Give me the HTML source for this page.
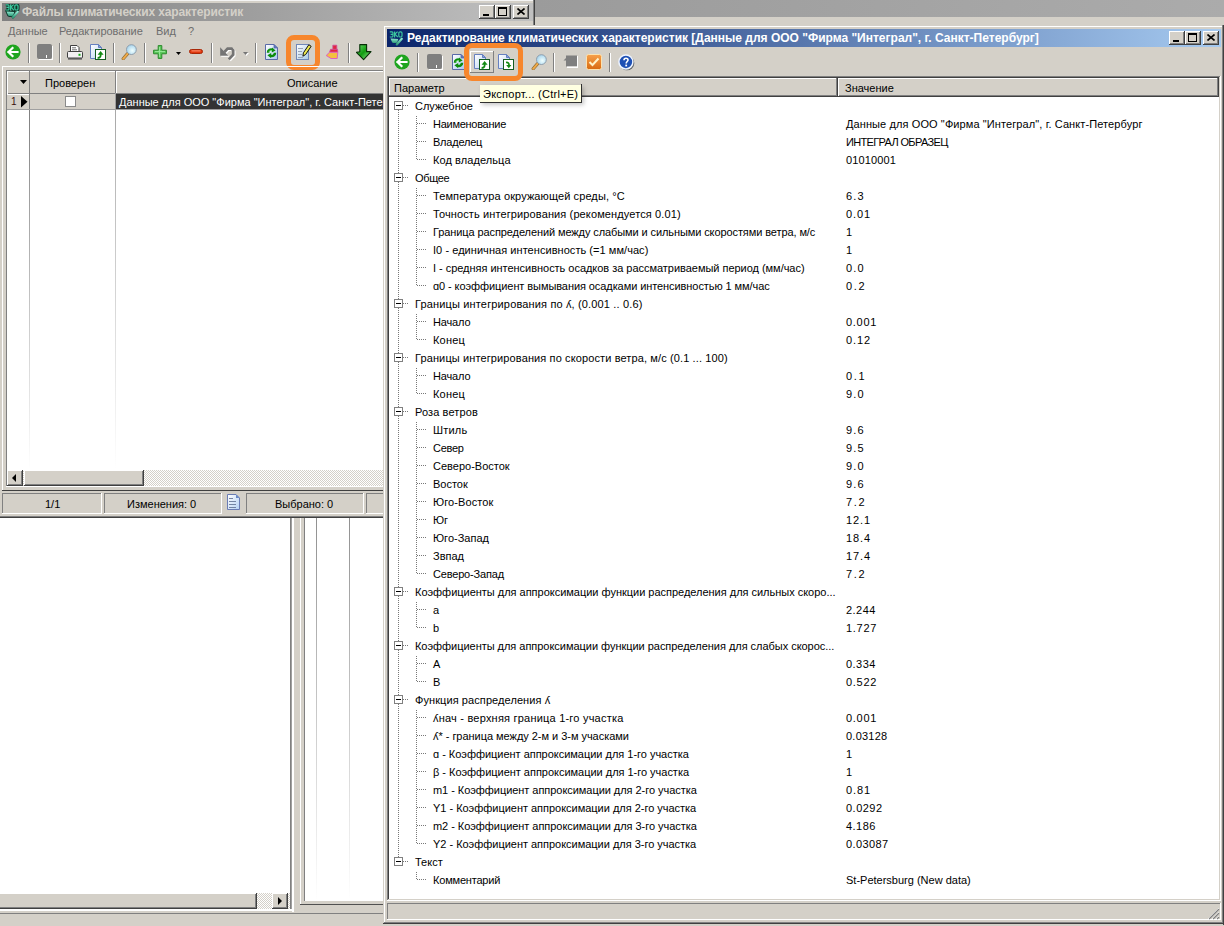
<!DOCTYPE html><html><head><meta charset="utf-8"><style>*{margin:0;padding:0;box-sizing:border-box}html,body{width:1224px;height:926px;overflow:hidden}body{position:relative;background:#d4d0c8;font-family:"Liberation Sans",sans-serif;font-size:11px;color:#000}div,span{position:absolute}span{white-space:pre;line-height:18px}</style></head><body>
<div style="left:535px;top:0px;width:689px;height:17px;background:linear-gradient(90deg,#9b9b9b,#ababab);"></div>
<div style="left:0px;top:0px;width:535px;height:518px;background:#d4d0c8;"></div>
<div style="left:0px;top:0px;width:533px;height:1px;background:#f4f4f4;"></div>
<div style="left:533px;top:0px;width:1px;height:25px;background:#808080;"></div>
<div style="left:534px;top:0px;width:1px;height:25px;background:#404040;"></div>
<div style="left:0px;top:516px;width:534px;height:1px;background:#808080;"></div>
<div style="left:0px;top:517px;width:534px;height:1px;background:#404040;"></div>
<div style="left:2px;top:3px;width:531px;height:18px;background:linear-gradient(90deg,#808080,#c0c0c0);"></div>
<svg style="position:absolute;left:5px;top:4px" width="15" height="16" viewBox="0 0 15 16"><defs><linearGradient id="eb" x1="0" y1="0" x2="0" y2="1"><stop offset="0" stop-color="#8ee8d0"/><stop offset="1" stop-color="#2e9a78"/></linearGradient></defs><path d="M0.8 0.8 H3 Q4 0.8 4 2 V4.8 Q4 6 3 6 H0.8 M1.6 3.4 H3.8 M5.6 0.4 V6.4 M5.6 3.4 L8.6 0.6 M6 3.2 L8.8 6.2" stroke="#0e3a2c" stroke-width="3.2" fill="none"/><rect x="9.8" y="0.8" width="3.2" height="5.2" rx="1.3" stroke="#0e3a2c" stroke-width="3.2" fill="none"/><path d="M1.5 7.4 L9.2 8 L8.2 11.4 Q5.5 12.8 3.2 11.4 Z" fill="#0e3a2c" stroke="#0e3a2c" stroke-width="2"/><path d="M7.8 13.4 L12.8 7.8" stroke="#0e3a2c" stroke-width="2.2" stroke-linecap="round"/><path d="M0.8 0.8 H3 Q4 0.8 4 2 V4.8 Q4 6 3 6 H0.8 M1.6 3.4 H3.8 M5.6 0.4 V6.4 M5.6 3.4 L8.6 0.6 M6 3.2 L8.8 6.2" stroke="#3cc89e" stroke-width="1.2" fill="none"/><rect x="9.8" y="0.8" width="3.2" height="5.2" rx="1.3" stroke="#3cc89e" stroke-width="1.2" fill="none"/><path d="M1.5 7.4 L9.2 8 L8.2 11.4 Q5.5 12.8 3.2 11.4 Z" fill="url(#eb)"/><path d="M7.8 13.4 L12.8 7.8" stroke="url(#eb)" stroke-width="2.2" stroke-linecap="round"/></svg>
<span style="left:22px;top:3px;font-weight:bold;font-size:12px;letter-spacing:-0.13px;color:#d4d0c8">Файлы климатических характеристик</span>
<div style="left:479px;top:5px;width:16px;height:14px;background:#d4d0c8;"></div>
<div style="left:479px;top:5px;width:16px;height:1px;background:#ffffff;"></div>
<div style="left:479px;top:5px;width:1px;height:14px;background:#ffffff;"></div>
<div style="left:479px;top:18px;width:16px;height:1px;background:#404040;"></div>
<div style="left:494px;top:5px;width:1px;height:14px;background:#404040;"></div>
<div style="left:480px;top:17px;width:14px;height:1px;background:#808080;"></div>
<div style="left:493px;top:6px;width:1px;height:12px;background:#808080;"></div>
<div style="left:495px;top:5px;width:16px;height:14px;background:#d4d0c8;"></div>
<div style="left:495px;top:5px;width:16px;height:1px;background:#ffffff;"></div>
<div style="left:495px;top:5px;width:1px;height:14px;background:#ffffff;"></div>
<div style="left:495px;top:18px;width:16px;height:1px;background:#404040;"></div>
<div style="left:510px;top:5px;width:1px;height:14px;background:#404040;"></div>
<div style="left:496px;top:17px;width:14px;height:1px;background:#808080;"></div>
<div style="left:509px;top:6px;width:1px;height:12px;background:#808080;"></div>
<div style="left:513px;top:5px;width:16px;height:14px;background:#d4d0c8;"></div>
<div style="left:513px;top:5px;width:16px;height:1px;background:#ffffff;"></div>
<div style="left:513px;top:5px;width:1px;height:14px;background:#ffffff;"></div>
<div style="left:513px;top:18px;width:16px;height:1px;background:#404040;"></div>
<div style="left:528px;top:5px;width:1px;height:14px;background:#404040;"></div>
<div style="left:514px;top:17px;width:14px;height:1px;background:#808080;"></div>
<div style="left:527px;top:6px;width:1px;height:12px;background:#808080;"></div>
<div style="left:483px;top:14px;width:6px;height:2px;background:#000;"></div>
<div style="left:498px;top:7px;width:9px;height:9px;border:1px solid #000;border-top-width:2px"></div>
<svg style="position:absolute;left:517px;top:8px" width="8" height="7" viewBox="0 0 8 7"><path d="M0.5 0.5 L7.5 6.5 M7.5 0.5 L0.5 6.5" stroke="#000" stroke-width="1.6"/></svg>
<span style="left:8px;top:22px;color:#6d6d6d">Данные</span>
<span style="left:59px;top:22px;color:#6d6d6d">Редактирование</span>
<span style="left:156px;top:22px;color:#6d6d6d">Вид</span>
<span style="left:188px;top:22px;color:#6d6d6d">?</span>
<svg style="position:absolute;left:5px;top:44px" width="16" height="16" viewBox="0 0 16 16"><circle cx="8" cy="8" r="7.6" fill="#1fa51f"/><path d="M3.5 8 L7.5 4 M3.5 8 L7.5 12 M3.5 8 H12.5" stroke="#fff" stroke-width="2.2" fill="none" stroke-linecap="square"/></svg>
<div style="left:28px;top:43px;width:1px;height:20px;background:#808080;"></div>
<div style="left:29px;top:43px;width:1px;height:20px;background:#ffffff;"></div>
<svg style="position:absolute;left:37px;top:44px" width="17" height="17" viewBox="0 0 17 17"><rect x="0" y="0" width="15" height="15" rx="2" fill="#7f7f7f"/><rect x="15" y="2" width="1" height="14" fill="#fff"/><rect x="2" y="15" width="14" height="1" fill="#fff"/><rect x="9" y="11" width="1" height="3" fill="#fff"/></svg>
<div style="left:59px;top:43px;width:1px;height:20px;background:#808080;"></div>
<div style="left:60px;top:43px;width:1px;height:20px;background:#ffffff;"></div>
<svg style="position:absolute;left:67px;top:44px" width="16" height="17" viewBox="0 0 16 17"><path d="M3.5 1.5 H10 L12 3.5 V7.5 H3.5 Z" fill="#fff" stroke="#404040"/><path d="M5 3.8 H9 M5 5.8 H10" stroke="#707070"/><rect x="0.5" y="7.5" width="15" height="6.5" rx="1" fill="#f2f0f2" stroke="#404040"/><rect x="1" y="14" width="14" height="1.6" fill="#5a5a5a"/><rect x="11.5" y="9.8" width="2" height="2" fill="#10b010"/></svg>
<svg style="position:absolute;left:90px;top:44px" width="17" height="17" viewBox="0 0 17 17"><defs><linearGradient id="dg" x1="0" y1="0" x2="1" y2="1"><stop offset="0" stop-color="#ffffff"/><stop offset="1" stop-color="#bcd2f2"/></linearGradient></defs><path d="M0.5 0.5h8l3 3V14.5H0.5z" fill="url(#dg)" stroke="#6680c0"/><path d="M8.5 0.5v3h3z" fill="#8aa4dc" stroke="#6680c0"/><rect x="5.5" y="5.5" width="10" height="10" fill="#fff" stroke="#145c22"/><path d="M7.6 14 C10.4 14 11 12.2 10.5 10" stroke="#128a12" stroke-width="1.8" fill="none"/><path d="M7.6 10.8 L10.6 6.9 L13.6 10.8z" fill="#128a12"/></svg>
<div style="left:113px;top:43px;width:1px;height:20px;background:#808080;"></div>
<div style="left:114px;top:43px;width:1px;height:20px;background:#ffffff;"></div>
<svg style="position:absolute;left:120px;top:44px" width="17" height="16" viewBox="0 0 17 16"><defs><radialGradient id="lg" cx="0.6" cy="0.6" r="0.6"><stop offset="0" stop-color="#f0ffff"/><stop offset="1" stop-color="#a8d4ec"/></radialGradient></defs><path d="M7.6 9.6 L3.2 14.8" stroke="#8a6a3a" stroke-width="3.2" stroke-linecap="round"/><path d="M7.6 9.6 L3.2 14.8" stroke="#f0aa48" stroke-width="2" stroke-linecap="round"/><circle cx="11.4" cy="5.6" r="4.9" fill="url(#lg)" stroke="#8898a8" stroke-width="0.9"/></svg>
<div style="left:144px;top:43px;width:1px;height:20px;background:#808080;"></div>
<div style="left:145px;top:43px;width:1px;height:20px;background:#ffffff;"></div>
<svg style="position:absolute;left:153px;top:45px" width="15" height="15" viewBox="0 0 15 15"><path d="M5.2 0.6 H8.8 V5.2 H13.4 V8.8 H8.8 V13.4 H5.2 V8.8 H0.6 V5.2 H5.2 Z" fill="#5cc85c" stroke="#2a8a2a" stroke-width="1" stroke-linejoin="round"/><path d="M6.5 2 V12 M2 6.5 H12" stroke="#9ae89a" stroke-width="0.9"/></svg>
<svg style="position:absolute;left:176px;top:52px" width="6" height="4" viewBox="0 0 6 4"><path d="M0 0h5l-2.5 3z" fill="#000"/></svg>
<svg style="position:absolute;left:189px;top:49px" width="14" height="5" viewBox="0 0 14 5"><rect x="0.5" y="0.5" width="13" height="4" rx="2" fill="#e0380e" stroke="#a82808"/><rect x="2.5" y="1.4" width="9" height="1" fill="#ff9a7a"/></svg>
<div style="left:211px;top:43px;width:1px;height:20px;background:#808080;"></div>
<div style="left:212px;top:43px;width:1px;height:20px;background:#ffffff;"></div>
<svg style="position:absolute;left:219px;top:46px" width="18" height="17" viewBox="0 0 18 17"><g transform="translate(1 1)"><path d="M1.2 1.2 V9.7 H9.4 Z" fill="#ffffff"/><path d="M5.5 6 L8.6 2.6 H12.6 L14.2 4.4 V8.6 L9.8 13.4" stroke="#ffffff" stroke-width="2.7" fill="none"/></g><g transform="translate(0 0)"><path d="M1.2 1.2 V9.7 H9.4 Z" fill="#747474"/><path d="M5.5 6 L8.6 2.6 H12.6 L14.2 4.4 V8.6 L9.8 13.4" stroke="#747474" stroke-width="2.7" fill="none"/></g></svg>
<svg style="position:absolute;left:244px;top:53px" width="6" height="4" viewBox="0 0 6 4"><path d="M0 0h5l-2.5 3z" fill="#ffffff"/></svg>
<svg style="position:absolute;left:243px;top:52px" width="6" height="4" viewBox="0 0 6 4"><path d="M0 0h5l-2.5 3z" fill="#747474"/></svg>
<div style="left:255px;top:43px;width:1px;height:20px;background:#808080;"></div>
<div style="left:256px;top:43px;width:1px;height:20px;background:#ffffff;"></div>
<svg style="position:absolute;left:265px;top:44px" width="14" height="17" viewBox="0 0 14 17"><defs><linearGradient id="rg" x1="0" y1="0" x2="1" y2="1"><stop offset="0" stop-color="#ffffff"/><stop offset="1" stop-color="#a8c8f0"/></linearGradient></defs><path d="M0.5 0.5H9L12.5 4V15.5H0.5Z" fill="url(#rg)" stroke="#5a6aa8"/><path d="M9 0.5L12.5 4H9Z" fill="#5a7ac0" stroke="#5a6aa8" stroke-width="0.8"/><path d="M3 8.8 C3 5.8 5.5 5 8 6" stroke="#0c8c0c" stroke-width="2.6" fill="none"/><path d="M7 3.6 L10.6 6.4 L6.8 8.6 Z" fill="#0c8c0c"/><path d="M10 8.8 C10 11.8 7.5 12.6 5 11.6" stroke="#0c8c0c" stroke-width="2.6" fill="none"/><path d="M6 14 L2.4 11.2 L6.2 9 Z" fill="#0c8c0c"/><path d="M4 8 C4.2 6.8 5.5 6.2 7 6.5" stroke="#8ef08e" stroke-width="0.8" fill="none"/></svg>
<svg style="position:absolute;left:296px;top:44px" width="17" height="17" viewBox="0 0 17 17"><defs><linearGradient id="eg" x1="0" y1="0" x2="1" y2="1"><stop offset="0" stop-color="#ffffff"/><stop offset="1" stop-color="#a8cce8"/></linearGradient></defs><rect x="0.5" y="0.5" width="12" height="15" fill="url(#eg)" stroke="#7088b8"/><path d="M2 4.5h5M2 7.5h4M2 10.5h4M2 13.5h5" stroke="#98a4b8"/><path d="M12.84 0.72 L15.16 2.28 L9.72 10.44 L6.9 12.2 L7.4 8.88 Z" fill="#f0ec50" stroke="#101010" stroke-width="1"/></svg>
<svg style="position:absolute;left:325px;top:44px" width="15" height="16" viewBox="0 0 15 16"><path d="M7.8 1.2 H11.8 V5.5 H7.8 Z" fill="#e02840" stroke="#d050a0" stroke-width="0.8"/><path d="M5.5 5.3 H12.5 L12.8 8.3 H4.5 Z" fill="#e02840" stroke="#d050a0" stroke-width="0.8"/><path d="M4.5 8.3 H12.8 L12.2 14.5 H6 L1.2 11.5 Z" fill="#f4c040" stroke="#e060c0" stroke-width="1"/></svg>
<div style="left:348px;top:43px;width:1px;height:20px;background:#808080;"></div>
<div style="left:349px;top:43px;width:1px;height:20px;background:#ffffff;"></div>
<svg style="position:absolute;left:356px;top:44px" width="17" height="17" viewBox="0 0 17 17"><defs><linearGradient id="ag" x1="0" y1="0" x2="1" y2="1"><stop offset="0" stop-color="#70e070"/><stop offset="0.5" stop-color="#109a10"/><stop offset="1" stop-color="#a0f4a0"/></linearGradient></defs><path d="M3.8 0.6h6.8v7h4.4l-7.4 8l-7.2-7.2l3.4-0.6z" fill="url(#ag)" stroke="#062e06" stroke-width="1.1" stroke-linejoin="round"/></svg>
<div style="left:286px;top:35px;width:34px;height:35px;border:5px solid #f7862c;border-radius:8px"></div>
<div style="left:2px;top:66px;width:381px;height:1px;background:#ffffff;"></div>
<div style="left:2px;top:66px;width:1px;height:425px;background:#ffffff;"></div>
<div style="left:2px;top:490px;width:381px;height:1px;background:#404040;"></div>
<div style="left:6px;top:70px;width:377px;height:417px;background:#ffffff;"></div>
<div style="left:6px;top:70px;width:377px;height:1px;background:#808080;"></div>
<div style="left:6px;top:70px;width:1px;height:417px;background:#808080;"></div>
<div style="left:6px;top:486px;width:377px;height:1px;background:#ffffff;"></div>
<div style="left:7px;top:71px;width:376px;height:22px;background:#d4d0c8;"></div>
<div style="left:7px;top:71px;width:376px;height:1px;background:#ffffff;"></div>
<div style="left:7px;top:93px;width:376px;height:1px;background:#808080;"></div>
<div style="left:29px;top:71px;width:1px;height:39px;background:#808080;"></div>
<div style="left:115px;top:71px;width:1px;height:22px;background:#808080;"></div>
<div style="left:116px;top:71px;width:1px;height:22px;background:#ffffff;"></div>
<div style="left:115px;top:93px;width:1px;height:17px;background:#a0a0a0;"></div>
<div style="left:29px;top:110px;width:1px;height:360px;background:linear-gradient(180deg,#808080,#ffffff);"></div>
<div style="left:115px;top:110px;width:1px;height:360px;background:linear-gradient(180deg,#a8a8a8,#ffffff);"></div>
<div style="left:7px;top:71px;width:1px;height:38px;background:#ffffff;"></div>
<svg style="position:absolute;left:20px;top:80px" width="8" height="5" viewBox="0 0 8 5"><path d="M0 0h7l-3.5 4z" fill="#000"/></svg>
<span style="left:45px;top:74px">Проверен</span>
<span style="left:287px;top:74px">Описание</span>
<div style="left:7px;top:94px;width:22px;height:15px;background:#d4d0c8;"></div>
<div style="left:30px;top:94px;width:85px;height:15px;background:#d4d0c8;"></div>
<div style="left:7px;top:94px;width:22px;height:1px;background:#ffffff;"></div>
<div style="left:116px;top:94px;width:267px;height:15px;background:#333333;"></div>
<div style="left:7px;top:109px;width:376px;height:1px;background:#a0a0a0;"></div>
<span style="left:11px;top:93px;font-size:10px;color:#3a0c0c">1</span>
<svg style="position:absolute;left:21px;top:96px" width="7" height="12" viewBox="0 0 7 12"><path d="M0 0 L6.5 5.75 L0 11.5z" fill="#000"/></svg>
<div style="left:65px;top:96px;width:11px;height:11px;background:#fff;border:1px solid #8a8a8a"></div>
<span style="left:119px;top:93px;color:#fff">Данные для ООО "Фирма "Интеграл", г. Санкт-Петербург"</span>
<div style="left:7px;top:470px;width:376px;height:16px;background:repeating-conic-gradient(#d4d0c8 0 25%,#fff 0 50%) 0 0/2px 2px;"></div>
<div style="left:7px;top:470px;width:16px;height:16px;background:#d4d0c8;"></div>
<div style="left:7px;top:470px;width:16px;height:1px;background:#ffffff;"></div>
<div style="left:7px;top:470px;width:1px;height:16px;background:#ffffff;"></div>
<div style="left:7px;top:485px;width:16px;height:1px;background:#404040;"></div>
<div style="left:22px;top:470px;width:1px;height:16px;background:#404040;"></div>
<div style="left:8px;top:484px;width:14px;height:1px;background:#808080;"></div>
<div style="left:21px;top:471px;width:1px;height:14px;background:#808080;"></div>
<svg style="position:absolute;left:12px;top:474px" width="5" height="8" viewBox="0 0 5 8"><path d="M4 0 L0 4 L4 8z" fill="#000"/></svg>
<div style="left:24px;top:470px;width:120px;height:16px;background:#d4d0c8;"></div>
<div style="left:24px;top:470px;width:120px;height:1px;background:#ffffff;"></div>
<div style="left:24px;top:470px;width:1px;height:16px;background:#ffffff;"></div>
<div style="left:24px;top:485px;width:120px;height:1px;background:#404040;"></div>
<div style="left:143px;top:470px;width:1px;height:16px;background:#404040;"></div>
<div style="left:25px;top:484px;width:118px;height:1px;background:#808080;"></div>
<div style="left:142px;top:471px;width:1px;height:14px;background:#808080;"></div>
<div style="left:2px;top:493px;width:100px;height:21px;background:#d4d0c8;"></div>
<div style="left:2px;top:493px;width:100px;height:1px;background:#808080;"></div>
<div style="left:2px;top:493px;width:1px;height:21px;background:#808080;"></div>
<div style="left:2px;top:513px;width:100px;height:1px;background:#ffffff;"></div>
<div style="left:101px;top:493px;width:1px;height:21px;background:#ffffff;"></div>
<div style="left:104px;top:493px;width:118px;height:21px;background:#d4d0c8;"></div>
<div style="left:104px;top:493px;width:118px;height:1px;background:#808080;"></div>
<div style="left:104px;top:493px;width:1px;height:21px;background:#808080;"></div>
<div style="left:104px;top:513px;width:118px;height:1px;background:#ffffff;"></div>
<div style="left:221px;top:493px;width:1px;height:21px;background:#ffffff;"></div>
<div style="left:246px;top:493px;width:118px;height:21px;background:#d4d0c8;"></div>
<div style="left:246px;top:493px;width:118px;height:1px;background:#808080;"></div>
<div style="left:246px;top:493px;width:1px;height:21px;background:#808080;"></div>
<div style="left:246px;top:513px;width:118px;height:1px;background:#ffffff;"></div>
<div style="left:363px;top:493px;width:1px;height:21px;background:#ffffff;"></div>
<div style="left:366px;top:493px;width:30px;height:21px;background:#d4d0c8;"></div>
<div style="left:366px;top:493px;width:30px;height:1px;background:#808080;"></div>
<div style="left:366px;top:493px;width:1px;height:21px;background:#808080;"></div>
<div style="left:366px;top:513px;width:30px;height:1px;background:#ffffff;"></div>
<div style="left:395px;top:493px;width:1px;height:21px;background:#ffffff;"></div>
<span style="left:45px;top:495px">1/1</span>
<span style="left:127px;top:495px">Изменения: 0</span>
<span style="left:275px;top:495px">Выбрано: 0</span>
<svg style="position:absolute;left:227px;top:494px" width="14" height="17" viewBox="0 0 14 17"><defs><linearGradient id="sg" x1="0" y1="0" x2="1" y2="1"><stop offset="0" stop-color="#ffffff"/><stop offset="1" stop-color="#b4d0f4"/></linearGradient></defs><path d="M0.5 0.5H9L12.5 4V15.5H0.5Z" fill="url(#sg)" stroke="#6a7cb4"/><path d="M9 0.5L12.5 4H9Z" fill="#6a8ac8"/><path d="M2 4.5h4M2 7.5h7M2 10.5h7M2 13.5h7" stroke="#687898" stroke-width="0.9"/></svg>
<div style="left:0px;top:518px;width:384px;height:408px;background:#d4d0c8;"></div>
<div style="left:0px;top:518px;width:290px;height:375px;background:#ffffff;"></div>
<div style="left:288px;top:518px;width:2px;height:375px;background:#ffffff;"></div>
<div style="left:290px;top:518px;width:1px;height:393px;background:#808080;"></div>
<div style="left:291px;top:518px;width:1px;height:393px;background:#a0a0a0;"></div>
<div style="left:292px;top:518px;width:2px;height:394px;background:#ffffff;"></div>
<div style="left:0px;top:893px;width:290px;height:16px;background:repeating-conic-gradient(#d4d0c8 0 25%,#fff 0 50%) 0 0/2px 2px;"></div>
<div style="left:-2px;top:893px;width:259px;height:16px;background:#d4d0c8;"></div>
<div style="left:-2px;top:893px;width:259px;height:1px;background:#ffffff;"></div>
<div style="left:-2px;top:893px;width:1px;height:16px;background:#ffffff;"></div>
<div style="left:-2px;top:908px;width:259px;height:1px;background:#404040;"></div>
<div style="left:256px;top:893px;width:1px;height:16px;background:#404040;"></div>
<div style="left:-1px;top:907px;width:257px;height:1px;background:#808080;"></div>
<div style="left:255px;top:894px;width:1px;height:14px;background:#808080;"></div>
<div style="left:272px;top:893px;width:16px;height:16px;background:#d4d0c8;"></div>
<div style="left:272px;top:893px;width:16px;height:1px;background:#ffffff;"></div>
<div style="left:272px;top:893px;width:1px;height:16px;background:#ffffff;"></div>
<div style="left:272px;top:908px;width:16px;height:1px;background:#404040;"></div>
<div style="left:287px;top:893px;width:1px;height:16px;background:#404040;"></div>
<div style="left:273px;top:907px;width:14px;height:1px;background:#808080;"></div>
<div style="left:286px;top:894px;width:1px;height:14px;background:#808080;"></div>
<svg style="position:absolute;left:278px;top:897px" width="5" height="8" viewBox="0 0 5 8"><path d="M0 0 L4 4 L0 8z" fill="#000"/></svg>
<div style="left:0px;top:909px;width:294px;height:2px;background:#ffffff;"></div>
<div style="left:0px;top:913px;width:384px;height:1px;background:#808080;"></div>
<div style="left:301px;top:518px;width:83px;height:386px;background:#d4d0c8;"></div>
<div style="left:305px;top:518px;width:79px;height:383px;background:#ffffff;"></div>
<div style="left:300px;top:518px;width:1px;height:386px;background:#ffffff;"></div>
<div style="left:304px;top:518px;width:1px;height:383px;background:#808080;"></div>
<div style="left:300px;top:904px;width:84px;height:1px;background:#505050;"></div>
<div style="left:316px;top:518px;width:1px;height:383px;background:linear-gradient(180deg,#909090,#ffffff);"></div>
<div style="left:349px;top:518px;width:1px;height:383px;background:linear-gradient(180deg,#909090,#ffffff);"></div>
<div style="left:383px;top:25px;width:841px;height:901px;background:#d4d0c8;"></div>
<div style="left:384px;top:26px;width:838px;height:1px;background:#ffffff;"></div>
<div style="left:384px;top:26px;width:1px;height:897px;background:#ffffff;"></div>
<div style="left:1222px;top:25px;width:1px;height:899px;background:#808080;"></div>
<div style="left:1223px;top:25px;width:1px;height:900px;background:#404040;"></div>
<div style="left:384px;top:922px;width:839px;height:1px;background:#808080;"></div>
<div style="left:383px;top:923px;width:841px;height:1px;background:#404040;"></div>
<div style="left:387px;top:29px;width:834px;height:18px;background:linear-gradient(90deg,#0a246a,#a6caf0);"></div>
<svg style="position:absolute;left:389px;top:31px" width="15" height="16" viewBox="0 0 15 16"><defs><linearGradient id="eb" x1="0" y1="0" x2="0" y2="1"><stop offset="0" stop-color="#8ee8d0"/><stop offset="1" stop-color="#2e9a78"/></linearGradient></defs><path d="M0.8 0.8 H3 Q4 0.8 4 2 V4.8 Q4 6 3 6 H0.8 M1.6 3.4 H3.8 M5.6 0.4 V6.4 M5.6 3.4 L8.6 0.6 M6 3.2 L8.8 6.2" stroke="#3cc89e" stroke-width="1.2" fill="none"/><rect x="9.8" y="0.8" width="3.2" height="5.2" rx="1.3" stroke="#3cc89e" stroke-width="1.2" fill="none"/><path d="M1.5 7.4 L9.2 8 L8.2 11.4 Q5.5 12.8 3.2 11.4 Z" fill="url(#eb)"/><path d="M7.8 13.4 L12.8 7.8" stroke="url(#eb)" stroke-width="2.2" stroke-linecap="round"/></svg>
<span style="left:407px;top:29px;font-weight:bold;font-size:12px;color:#fff">Редактирование климатических характеристик [Данные для ООО "Фирма "Интеграл", г. Санкт-Петербург]</span>
<div style="left:1169px;top:31px;width:16px;height:14px;background:#d4d0c8;"></div>
<div style="left:1169px;top:31px;width:16px;height:1px;background:#ffffff;"></div>
<div style="left:1169px;top:31px;width:1px;height:14px;background:#ffffff;"></div>
<div style="left:1169px;top:44px;width:16px;height:1px;background:#404040;"></div>
<div style="left:1184px;top:31px;width:1px;height:14px;background:#404040;"></div>
<div style="left:1170px;top:43px;width:14px;height:1px;background:#808080;"></div>
<div style="left:1183px;top:32px;width:1px;height:12px;background:#808080;"></div>
<div style="left:1185px;top:31px;width:16px;height:14px;background:#d4d0c8;"></div>
<div style="left:1185px;top:31px;width:16px;height:1px;background:#ffffff;"></div>
<div style="left:1185px;top:31px;width:1px;height:14px;background:#ffffff;"></div>
<div style="left:1185px;top:44px;width:16px;height:1px;background:#404040;"></div>
<div style="left:1200px;top:31px;width:1px;height:14px;background:#404040;"></div>
<div style="left:1186px;top:43px;width:14px;height:1px;background:#808080;"></div>
<div style="left:1199px;top:32px;width:1px;height:12px;background:#808080;"></div>
<div style="left:1203px;top:31px;width:16px;height:14px;background:#d4d0c8;"></div>
<div style="left:1203px;top:31px;width:16px;height:1px;background:#ffffff;"></div>
<div style="left:1203px;top:31px;width:1px;height:14px;background:#ffffff;"></div>
<div style="left:1203px;top:44px;width:16px;height:1px;background:#404040;"></div>
<div style="left:1218px;top:31px;width:1px;height:14px;background:#404040;"></div>
<div style="left:1204px;top:43px;width:14px;height:1px;background:#808080;"></div>
<div style="left:1217px;top:32px;width:1px;height:12px;background:#808080;"></div>
<div style="left:1173px;top:40px;width:6px;height:2px;background:#000;"></div>
<div style="left:1188px;top:33px;width:9px;height:9px;border:1px solid #000;border-top-width:2px"></div>
<svg style="position:absolute;left:1207px;top:34px" width="8" height="7" viewBox="0 0 8 7"><path d="M0.5 0.5 L7.5 6.5 M7.5 0.5 L0.5 6.5" stroke="#000" stroke-width="1.6"/></svg>
<svg style="position:absolute;left:394px;top:54px" width="16" height="16" viewBox="0 0 16 16"><circle cx="8" cy="8" r="7.6" fill="#1fa51f"/><path d="M3.5 8 L7.5 4 M3.5 8 L7.5 12 M3.5 8 H12.5" stroke="#fff" stroke-width="2.2" fill="none" stroke-linecap="square"/></svg>
<div style="left:417px;top:53px;width:1px;height:19px;background:#808080;"></div>
<div style="left:418px;top:53px;width:1px;height:19px;background:#ffffff;"></div>
<svg style="position:absolute;left:427px;top:54px" width="17" height="17" viewBox="0 0 17 17"><rect x="0" y="0" width="15" height="15" rx="2" fill="#7f7f7f"/><rect x="15" y="2" width="1" height="14" fill="#fff"/><rect x="2" y="15" width="14" height="1" fill="#fff"/><rect x="9" y="11" width="1" height="3" fill="#fff"/></svg>
<svg style="position:absolute;left:452px;top:54px" width="14" height="17" viewBox="0 0 14 17"><defs><linearGradient id="rg" x1="0" y1="0" x2="1" y2="1"><stop offset="0" stop-color="#ffffff"/><stop offset="1" stop-color="#a8c8f0"/></linearGradient></defs><path d="M0.5 0.5H9L12.5 4V15.5H0.5Z" fill="url(#rg)" stroke="#5a6aa8"/><path d="M9 0.5L12.5 4H9Z" fill="#5a7ac0" stroke="#5a6aa8" stroke-width="0.8"/><path d="M3 8.8 C3 5.8 5.5 5 8 6" stroke="#0c8c0c" stroke-width="2.6" fill="none"/><path d="M7 3.6 L10.6 6.4 L6.8 8.6 Z" fill="#0c8c0c"/><path d="M10 8.8 C10 11.8 7.5 12.6 5 11.6" stroke="#0c8c0c" stroke-width="2.6" fill="none"/><path d="M6 14 L2.4 11.2 L6.2 9 Z" fill="#0c8c0c"/><path d="M4 8 C4.2 6.8 5.5 6.2 7 6.5" stroke="#8ef08e" stroke-width="0.8" fill="none"/></svg>
<div style="left:470px;top:51px;width:24px;height:1px;background:#ffffff;"></div>
<div style="left:470px;top:51px;width:1px;height:22px;background:#ffffff;"></div>
<div style="left:470px;top:72px;width:24px;height:1px;background:#808080;"></div>
<div style="left:493px;top:51px;width:1px;height:22px;background:#808080;"></div>
<svg style="position:absolute;left:474px;top:54px" width="17" height="17" viewBox="0 0 17 17"><defs><linearGradient id="dg" x1="0" y1="0" x2="1" y2="1"><stop offset="0" stop-color="#ffffff"/><stop offset="1" stop-color="#bcd2f2"/></linearGradient></defs><path d="M0.5 0.5h8l3 3V14.5H0.5z" fill="url(#dg)" stroke="#6680c0"/><path d="M8.5 0.5v3h3z" fill="#8aa4dc" stroke="#6680c0"/><rect x="5.5" y="5.5" width="10" height="10" fill="#fff" stroke="#145c22"/><path d="M7.6 14 C10.4 14 11 12.2 10.5 10" stroke="#128a12" stroke-width="1.8" fill="none"/><path d="M7.6 10.8 L10.6 6.9 L13.6 10.8z" fill="#128a12"/></svg>
<svg style="position:absolute;left:498px;top:54px" width="17" height="17" viewBox="0 0 17 17"><defs><linearGradient id="dg" x1="0" y1="0" x2="1" y2="1"><stop offset="0" stop-color="#ffffff"/><stop offset="1" stop-color="#bcd2f2"/></linearGradient></defs><path d="M0.5 0.5h8l3 3V14.5H0.5z" fill="url(#dg)" stroke="#6680c0"/><path d="M8.5 0.5v3h3z" fill="#8aa4dc" stroke="#6680c0"/><rect x="5.5" y="5.5" width="10" height="10" fill="#fff" stroke="#145c22"/><path d="M8 8.5 C10 8.2 11.5 9.5 10.8 11.5" stroke="#128a12" stroke-width="1.7" fill="none"/><path d="M8.2 11 L10.8 14.3 L13.4 11z" fill="#128a12"/></svg>
<svg style="position:absolute;left:530px;top:54px" width="17" height="16" viewBox="0 0 17 16"><defs><radialGradient id="lg" cx="0.6" cy="0.6" r="0.6"><stop offset="0" stop-color="#f0ffff"/><stop offset="1" stop-color="#a8d4ec"/></radialGradient></defs><path d="M7.6 9.6 L3.2 14.8" stroke="#8a6a3a" stroke-width="3.2" stroke-linecap="round"/><path d="M7.6 9.6 L3.2 14.8" stroke="#f0aa48" stroke-width="2" stroke-linecap="round"/><circle cx="11.4" cy="5.6" r="4.9" fill="url(#lg)" stroke="#8898a8" stroke-width="0.9"/></svg>
<div style="left:553px;top:53px;width:1px;height:19px;background:#808080;"></div>
<div style="left:554px;top:53px;width:1px;height:19px;background:#ffffff;"></div>
<svg style="position:absolute;left:563px;top:55px" width="15" height="13" viewBox="0 0 15 13"><rect x="3" y="0.5" width="11" height="11" fill="#7f7f7f"/><rect x="4" y="11.5" width="11" height="1.5" fill="#fff"/><rect x="14" y="1" width="1" height="11" fill="#fff"/><path d="M3 3 L0.5 5.5 L3 5.5" fill="#7f7f7f"/></svg>
<svg style="position:absolute;left:586px;top:54px" width="16" height="16" viewBox="0 0 16 16"><defs><linearGradient id="og" x1="0" y1="0" x2="0" y2="1"><stop offset="0" stop-color="#f7a04a"/><stop offset="1" stop-color="#d86a10"/></linearGradient></defs><rect x="0.5" y="0.5" width="15" height="15" rx="2" fill="url(#og)" stroke="#fbe2b0"/><path d="M3.5 8 L6.5 11 L12.5 4.5" stroke="#fff2c8" stroke-width="2" fill="none"/></svg>
<div style="left:609px;top:53px;width:1px;height:19px;background:#808080;"></div>
<div style="left:610px;top:53px;width:1px;height:19px;background:#ffffff;"></div>
<svg style="position:absolute;left:618px;top:54px" width="18" height="18" viewBox="0 0 18 18"><circle cx="8.9" cy="8.9" r="7.4" fill="#3a4048" opacity="0.75"/><circle cx="7.9" cy="7.9" r="7" fill="#1e50b4" stroke="#eef4ff" stroke-width="1.5"/><path d="M6 6.2 C6 3.6 10 3.6 10 6 C10 7.5 8.2 7.6 8.2 9.4" stroke="#fff" stroke-width="1.6" fill="none"/><rect x="7.3" y="10.6" width="1.8" height="1.8" fill="#fff"/></svg>
<div style="left:387px;top:76px;width:834px;height:825px;background:#ffffff;"></div>
<div style="left:387px;top:76px;width:834px;height:1px;background:#808080;"></div>
<div style="left:387px;top:76px;width:1px;height:825px;background:#808080;"></div>
<div style="left:388px;top:77px;width:832px;height:1px;background:#404040;"></div>
<div style="left:388px;top:77px;width:1px;height:823px;background:#404040;"></div>
<div style="left:387px;top:900px;width:834px;height:1px;background:#ffffff;"></div>
<div style="left:1220px;top:76px;width:1px;height:825px;background:#ffffff;"></div>
<div style="left:388px;top:899px;width:832px;height:1px;background:#d4d0c8;"></div>
<div style="left:1219px;top:77px;width:1px;height:823px;background:#d4d0c8;"></div>
<div style="left:389px;top:78px;width:830px;height:19px;background:#d4d0c8;"></div>
<div style="left:389px;top:78px;width:830px;height:1px;background:#ffffff;"></div>
<div style="left:389px;top:78px;width:1px;height:19px;background:#ffffff;"></div>
<div style="left:389px;top:95px;width:830px;height:1px;background:#808080;"></div>
<div style="left:389px;top:96px;width:830px;height:1px;background:#404040;"></div>
<div style="left:836px;top:78px;width:1px;height:18px;background:#808080;"></div>
<div style="left:837px;top:78px;width:1px;height:19px;background:#404040;"></div>
<div style="left:838px;top:78px;width:1px;height:18px;background:#ffffff;"></div>
<div style="left:1217px;top:78px;width:1px;height:18px;background:#808080;"></div>
<div style="left:1218px;top:78px;width:1px;height:19px;background:#404040;"></div>
<span style="left:394px;top:79px">Параметр</span>
<span style="left:845px;top:79px">Значение</span>
<div style="left:398px;top:110px;width:1px;height:749px;background:repeating-linear-gradient(180deg,#787878 0 1px,transparent 1px 2px)"></div>
<div style="left:394px;top:101px;width:9px;height:9px;background:#fff;border:1px solid #808080"></div>
<div style="left:396px;top:105px;width:5px;height:1px;background:#000;"></div>
<div style="left:403px;top:105px;width:5px;height:1px;background:repeating-linear-gradient(90deg,#787878 0 1px,transparent 1px 2px)"></div>
<span style="left:415px;top:97px;letter-spacing:0.000px">Служебное</span>
<div style="left:417px;top:123px;width:9px;height:1px;background:repeating-linear-gradient(90deg,#787878 0 1px,transparent 1px 2px)"></div>
<span style="left:433px;top:115px;letter-spacing:-0.273px">Наименование</span>
<span style="left:846px;top:115px;letter-spacing:0.1px">Данные для ООО "Фирма "Интеграл", г. Санкт-Петербург</span>
<div style="left:417px;top:141px;width:9px;height:1px;background:repeating-linear-gradient(90deg,#787878 0 1px,transparent 1px 2px)"></div>
<span style="left:433px;top:133px;letter-spacing:-0.214px">Владелец</span>
<span style="left:846px;top:133px;letter-spacing:-0.65px">ИНТЕГРАЛ ОБРАЗЕЦ</span>
<div style="left:417px;top:159px;width:9px;height:1px;background:repeating-linear-gradient(90deg,#787878 0 1px,transparent 1px 2px)"></div>
<div style="left:416px;top:116px;width:1px;height:44px;background:repeating-linear-gradient(180deg,#787878 0 1px,transparent 1px 2px)"></div>
<span style="left:433px;top:151px;letter-spacing:0.075px">Код владельца</span>
<span style="left:846px;top:151px;letter-spacing:0.129px">01010001</span>
<div style="left:394px;top:173px;width:9px;height:9px;background:#fff;border:1px solid #808080"></div>
<div style="left:396px;top:177px;width:5px;height:1px;background:#000;"></div>
<div style="left:403px;top:177px;width:5px;height:1px;background:repeating-linear-gradient(90deg,#787878 0 1px,transparent 1px 2px)"></div>
<span style="left:415px;top:169px;letter-spacing:-0.350px">Общее</span>
<div style="left:417px;top:195px;width:9px;height:1px;background:repeating-linear-gradient(90deg,#787878 0 1px,transparent 1px 2px)"></div>
<span style="left:433px;top:187px;letter-spacing:0.103px">Температура окружающей среды, °C</span>
<span style="left:846px;top:187px;letter-spacing:1.15px">6.3</span>
<div style="left:417px;top:213px;width:9px;height:1px;background:repeating-linear-gradient(90deg,#787878 0 1px,transparent 1px 2px)"></div>
<span style="left:433px;top:205px;letter-spacing:0.116px">Точность интегрирования (рекомендуется 0.01)</span>
<span style="left:846px;top:205px;letter-spacing:0.917px">0.01</span>
<div style="left:417px;top:231px;width:9px;height:1px;background:repeating-linear-gradient(90deg,#787878 0 1px,transparent 1px 2px)"></div>
<span style="left:433px;top:223px;letter-spacing:-0.096px">Граница распределений между слабыми и сильными скоростями ветра, м/с</span>
<span style="left:846px;top:223px;letter-spacing:0px">1</span>
<div style="left:417px;top:249px;width:9px;height:1px;background:repeating-linear-gradient(90deg,#787878 0 1px,transparent 1px 2px)"></div>
<span style="left:433px;top:241px;letter-spacing:0.051px">I0 - единичная интенсивность (=1 мм/час)</span>
<span style="left:846px;top:241px;letter-spacing:0px">1</span>
<div style="left:417px;top:267px;width:9px;height:1px;background:repeating-linear-gradient(90deg,#787878 0 1px,transparent 1px 2px)"></div>
<span style="left:433px;top:259px;letter-spacing:-0.030px">I - средняя интенсивность осадков за рассматриваемый период (мм/час)</span>
<span style="left:846px;top:259px;letter-spacing:1.15px">0.0</span>
<div style="left:417px;top:285px;width:9px;height:1px;background:repeating-linear-gradient(90deg,#787878 0 1px,transparent 1px 2px)"></div>
<div style="left:416px;top:188px;width:1px;height:98px;background:repeating-linear-gradient(180deg,#787878 0 1px,transparent 1px 2px)"></div>
<span style="left:433px;top:277px;letter-spacing:-0.079px">ɑ0 - коэффициент вымывания осадками интенсивностью 1 мм/час</span>
<span style="left:846px;top:277px;letter-spacing:1.65px">0.2</span>
<div style="left:394px;top:299px;width:9px;height:9px;background:#fff;border:1px solid #808080"></div>
<div style="left:396px;top:303px;width:5px;height:1px;background:#000;"></div>
<div style="left:403px;top:303px;width:5px;height:1px;background:repeating-linear-gradient(90deg,#787878 0 1px,transparent 1px 2px)"></div>
<span style="left:415px;top:295px;letter-spacing:0.152px">Границы интегрирования по ʎ, (0.001 .. 0.6)</span>
<div style="left:417px;top:321px;width:9px;height:1px;background:repeating-linear-gradient(90deg,#787878 0 1px,transparent 1px 2px)"></div>
<span style="left:433px;top:313px;letter-spacing:-0.160px">Начало</span>
<span style="left:846px;top:313px;letter-spacing:0.7px">0.001</span>
<div style="left:417px;top:339px;width:9px;height:1px;background:repeating-linear-gradient(90deg,#787878 0 1px,transparent 1px 2px)"></div>
<div style="left:416px;top:314px;width:1px;height:26px;background:repeating-linear-gradient(180deg,#787878 0 1px,transparent 1px 2px)"></div>
<span style="left:433px;top:331px;letter-spacing:0.200px">Конец</span>
<span style="left:846px;top:331px;letter-spacing:0.917px">0.12</span>
<div style="left:394px;top:353px;width:9px;height:9px;background:#fff;border:1px solid #808080"></div>
<div style="left:396px;top:357px;width:5px;height:1px;background:#000;"></div>
<div style="left:403px;top:357px;width:5px;height:1px;background:repeating-linear-gradient(90deg,#787878 0 1px,transparent 1px 2px)"></div>
<span style="left:415px;top:349px;letter-spacing:0.117px">Границы интегрирования по скорости ветра, м/с (0.1 ... 100)</span>
<div style="left:417px;top:375px;width:9px;height:1px;background:repeating-linear-gradient(90deg,#787878 0 1px,transparent 1px 2px)"></div>
<span style="left:433px;top:367px;letter-spacing:-0.160px">Начало</span>
<span style="left:846px;top:367px;letter-spacing:1.65px">0.1</span>
<div style="left:417px;top:393px;width:9px;height:1px;background:repeating-linear-gradient(90deg,#787878 0 1px,transparent 1px 2px)"></div>
<div style="left:416px;top:368px;width:1px;height:26px;background:repeating-linear-gradient(180deg,#787878 0 1px,transparent 1px 2px)"></div>
<span style="left:433px;top:385px;letter-spacing:0.200px">Конец</span>
<span style="left:846px;top:385px;letter-spacing:1.15px">9.0</span>
<div style="left:394px;top:407px;width:9px;height:9px;background:#fff;border:1px solid #808080"></div>
<div style="left:396px;top:411px;width:5px;height:1px;background:#000;"></div>
<div style="left:403px;top:411px;width:5px;height:1px;background:repeating-linear-gradient(90deg,#787878 0 1px,transparent 1px 2px)"></div>
<span style="left:415px;top:403px;letter-spacing:0.110px">Роза ветров</span>
<div style="left:417px;top:429px;width:9px;height:1px;background:repeating-linear-gradient(90deg,#787878 0 1px,transparent 1px 2px)"></div>
<span style="left:433px;top:421px;letter-spacing:0.200px">Штиль</span>
<span style="left:846px;top:421px;letter-spacing:1.15px">9.6</span>
<div style="left:417px;top:447px;width:9px;height:1px;background:repeating-linear-gradient(90deg,#787878 0 1px,transparent 1px 2px)"></div>
<span style="left:433px;top:439px;letter-spacing:-0.300px">Север</span>
<span style="left:846px;top:439px;letter-spacing:1.15px">9.5</span>
<div style="left:417px;top:465px;width:9px;height:1px;background:repeating-linear-gradient(90deg,#787878 0 1px,transparent 1px 2px)"></div>
<span style="left:433px;top:457px;letter-spacing:0.000px">Северо-Восток</span>
<span style="left:846px;top:457px;letter-spacing:1.15px">9.0</span>
<div style="left:417px;top:483px;width:9px;height:1px;background:repeating-linear-gradient(90deg,#787878 0 1px,transparent 1px 2px)"></div>
<span style="left:433px;top:475px;letter-spacing:0.000px">Восток</span>
<span style="left:846px;top:475px;letter-spacing:1.15px">9.6</span>
<div style="left:417px;top:501px;width:9px;height:1px;background:repeating-linear-gradient(90deg,#787878 0 1px,transparent 1px 2px)"></div>
<span style="left:433px;top:493px;letter-spacing:0.089px">Юго-Восток</span>
<span style="left:846px;top:493px;letter-spacing:1.65px">7.2</span>
<div style="left:417px;top:519px;width:9px;height:1px;background:repeating-linear-gradient(90deg,#787878 0 1px,transparent 1px 2px)"></div>
<span style="left:433px;top:511px;letter-spacing:0.000px">Юг</span>
<span style="left:846px;top:511px;letter-spacing:0.917px">12.1</span>
<div style="left:417px;top:537px;width:9px;height:1px;background:repeating-linear-gradient(90deg,#787878 0 1px,transparent 1px 2px)"></div>
<span style="left:433px;top:529px;letter-spacing:0.000px">Юго-Запад</span>
<span style="left:846px;top:529px;letter-spacing:0.917px">18.4</span>
<div style="left:417px;top:555px;width:9px;height:1px;background:repeating-linear-gradient(90deg,#787878 0 1px,transparent 1px 2px)"></div>
<span style="left:433px;top:547px;letter-spacing:0.000px">Звпад</span>
<span style="left:846px;top:547px;letter-spacing:0.917px">17.4</span>
<div style="left:417px;top:573px;width:9px;height:1px;background:repeating-linear-gradient(90deg,#787878 0 1px,transparent 1px 2px)"></div>
<div style="left:416px;top:422px;width:1px;height:152px;background:repeating-linear-gradient(180deg,#787878 0 1px,transparent 1px 2px)"></div>
<span style="left:433px;top:565px;letter-spacing:-0.182px">Северо-Запад</span>
<span style="left:846px;top:565px;letter-spacing:1.65px">7.2</span>
<div style="left:394px;top:587px;width:9px;height:9px;background:#fff;border:1px solid #808080"></div>
<div style="left:396px;top:591px;width:5px;height:1px;background:#000;"></div>
<div style="left:403px;top:591px;width:5px;height:1px;background:repeating-linear-gradient(90deg,#787878 0 1px,transparent 1px 2px)"></div>
<span style="left:415px;top:583px;letter-spacing:-0.017px">Коэффициенты для аппроксимации функции распределения для сильных скоро...</span>
<div style="left:417px;top:609px;width:9px;height:1px;background:repeating-linear-gradient(90deg,#787878 0 1px,transparent 1px 2px)"></div>
<span style="left:433px;top:601px;letter-spacing:0.000px">a</span>
<span style="left:846px;top:601px;letter-spacing:0.45px">2.244</span>
<div style="left:417px;top:627px;width:9px;height:1px;background:repeating-linear-gradient(90deg,#787878 0 1px,transparent 1px 2px)"></div>
<div style="left:416px;top:602px;width:1px;height:26px;background:repeating-linear-gradient(180deg,#787878 0 1px,transparent 1px 2px)"></div>
<span style="left:433px;top:619px;letter-spacing:0.000px">b</span>
<span style="left:846px;top:619px;letter-spacing:0.7px">1.727</span>
<div style="left:394px;top:641px;width:9px;height:9px;background:#fff;border:1px solid #808080"></div>
<div style="left:396px;top:645px;width:5px;height:1px;background:#000;"></div>
<div style="left:403px;top:645px;width:5px;height:1px;background:repeating-linear-gradient(90deg,#787878 0 1px,transparent 1px 2px)"></div>
<span style="left:415px;top:637px;letter-spacing:-0.033px">Коэффициенты для аппроксимации функции распределения для слабых скорос...</span>
<div style="left:417px;top:663px;width:9px;height:1px;background:repeating-linear-gradient(90deg,#787878 0 1px,transparent 1px 2px)"></div>
<span style="left:433px;top:655px;letter-spacing:0.000px">A</span>
<span style="left:846px;top:655px;letter-spacing:0.45px">0.334</span>
<div style="left:417px;top:681px;width:9px;height:1px;background:repeating-linear-gradient(90deg,#787878 0 1px,transparent 1px 2px)"></div>
<div style="left:416px;top:656px;width:1px;height:26px;background:repeating-linear-gradient(180deg,#787878 0 1px,transparent 1px 2px)"></div>
<span style="left:433px;top:673px;letter-spacing:0.000px">B</span>
<span style="left:846px;top:673px;letter-spacing:0.7px">0.522</span>
<div style="left:394px;top:695px;width:9px;height:9px;background:#fff;border:1px solid #808080"></div>
<div style="left:396px;top:699px;width:5px;height:1px;background:#000;"></div>
<div style="left:403px;top:699px;width:5px;height:1px;background:repeating-linear-gradient(90deg,#787878 0 1px,transparent 1px 2px)"></div>
<span style="left:415px;top:691px;letter-spacing:0.082px">Функция распределения ʎ</span>
<div style="left:417px;top:717px;width:9px;height:1px;background:repeating-linear-gradient(90deg,#787878 0 1px,transparent 1px 2px)"></div>
<span style="left:433px;top:709px;letter-spacing:0.212px">ʎнач - верхняя граница 1-го участка</span>
<span style="left:846px;top:709px;letter-spacing:0.7px">0.001</span>
<div style="left:417px;top:735px;width:9px;height:1px;background:repeating-linear-gradient(90deg,#787878 0 1px,transparent 1px 2px)"></div>
<span style="left:433px;top:727px;letter-spacing:-0.033px">ʎ* - граница между 2-м и 3-м учасками</span>
<span style="left:846px;top:727px;letter-spacing:0.233px">0.03128</span>
<div style="left:417px;top:753px;width:9px;height:1px;background:repeating-linear-gradient(90deg,#787878 0 1px,transparent 1px 2px)"></div>
<span style="left:433px;top:745px;letter-spacing:-0.022px">ɑ - Коэффициент аппроксимации для 1-го участка</span>
<span style="left:846px;top:745px;letter-spacing:0px">1</span>
<div style="left:417px;top:771px;width:9px;height:1px;background:repeating-linear-gradient(90deg,#787878 0 1px,transparent 1px 2px)"></div>
<span style="left:433px;top:763px;letter-spacing:-0.022px">β - Коэффициент аппроксимации для 1-го участка</span>
<span style="left:846px;top:763px;letter-spacing:0px">1</span>
<div style="left:417px;top:789px;width:9px;height:1px;background:repeating-linear-gradient(90deg,#787878 0 1px,transparent 1px 2px)"></div>
<span style="left:433px;top:781px;letter-spacing:-0.048px">m1 - Коэффициент аппроксимации для 2-го участка</span>
<span style="left:846px;top:781px;letter-spacing:0.917px">0.81</span>
<div style="left:417px;top:807px;width:9px;height:1px;background:repeating-linear-gradient(90deg,#787878 0 1px,transparent 1px 2px)"></div>
<span style="left:433px;top:799px;letter-spacing:-0.020px">Y1 - Коэффициент аппроксимации для 2-го участка</span>
<span style="left:846px;top:799px;letter-spacing:0.49px">0.0292</span>
<div style="left:417px;top:825px;width:9px;height:1px;background:repeating-linear-gradient(90deg,#787878 0 1px,transparent 1px 2px)"></div>
<span style="left:433px;top:817px;letter-spacing:-0.048px">m2 - Коэффициент аппроксимации для 3-го участка</span>
<span style="left:846px;top:817px;letter-spacing:0.45px">4.186</span>
<div style="left:417px;top:843px;width:9px;height:1px;background:repeating-linear-gradient(90deg,#787878 0 1px,transparent 1px 2px)"></div>
<div style="left:416px;top:710px;width:1px;height:134px;background:repeating-linear-gradient(180deg,#787878 0 1px,transparent 1px 2px)"></div>
<span style="left:433px;top:835px;letter-spacing:-0.020px">Y2 - Коэффициент аппроксимации для 3-го участка</span>
<span style="left:846px;top:835px;letter-spacing:0.4px">0.03087</span>
<div style="left:394px;top:857px;width:9px;height:9px;background:#fff;border:1px solid #808080"></div>
<div style="left:396px;top:861px;width:5px;height:1px;background:#000;"></div>
<div style="left:403px;top:861px;width:5px;height:1px;background:repeating-linear-gradient(90deg,#787878 0 1px,transparent 1px 2px)"></div>
<span style="left:415px;top:853px;letter-spacing:0.000px">Текст</span>
<div style="left:417px;top:879px;width:9px;height:1px;background:repeating-linear-gradient(90deg,#787878 0 1px,transparent 1px 2px)"></div>
<div style="left:416px;top:872px;width:1px;height:8px;background:repeating-linear-gradient(180deg,#787878 0 1px,transparent 1px 2px)"></div>
<span style="left:433px;top:871px;letter-spacing:-0.190px">Комментарий</span>
<span style="left:846px;top:871px;letter-spacing:0px">St-Petersburg (New data)</span>
<div style="left:387px;top:903px;width:834px;height:17px;background:#d4d0c8;"></div>
<div style="left:387px;top:903px;width:834px;height:1px;background:#808080;"></div>
<div style="left:387px;top:903px;width:1px;height:17px;background:#808080;"></div>
<div style="left:387px;top:919px;width:834px;height:1px;background:#ffffff;"></div>
<div style="left:1220px;top:903px;width:1px;height:17px;background:#ffffff;"></div>
<svg style="position:absolute;left:1207px;top:907px" width="13" height="13" viewBox="0 0 13 13"><path d="M12 1 L1 12 M12 5 L5 12 M12 9 L9 12" stroke="#fff" stroke-width="1"/><path d="M12 2 L2 12 M12 6 L6 12 M12 10 L10 12" stroke="#808080" stroke-width="1.2"/></svg>
<div style="left:464px;top:43px;width:59px;height:38px;border:5px solid #f7862c;border-radius:8px"></div>
<div style="left:482px;top:87px;width:102px;height:18px;background:rgba(0,0,0,0.22);filter:blur(2px)"></div>
<div style="left:480px;top:85px;width:101px;height:17px;background:#ffffe1;"></div>
<div style="left:581px;top:84px;width:1px;height:19px;background:#303030;"></div>
<div style="left:480px;top:102px;width:102px;height:1px;background:#303030;"></div>
<span style="left:483px;top:85px;letter-spacing:0.25px">Экспорт... (Ctrl+E)</span>
</body></html>
